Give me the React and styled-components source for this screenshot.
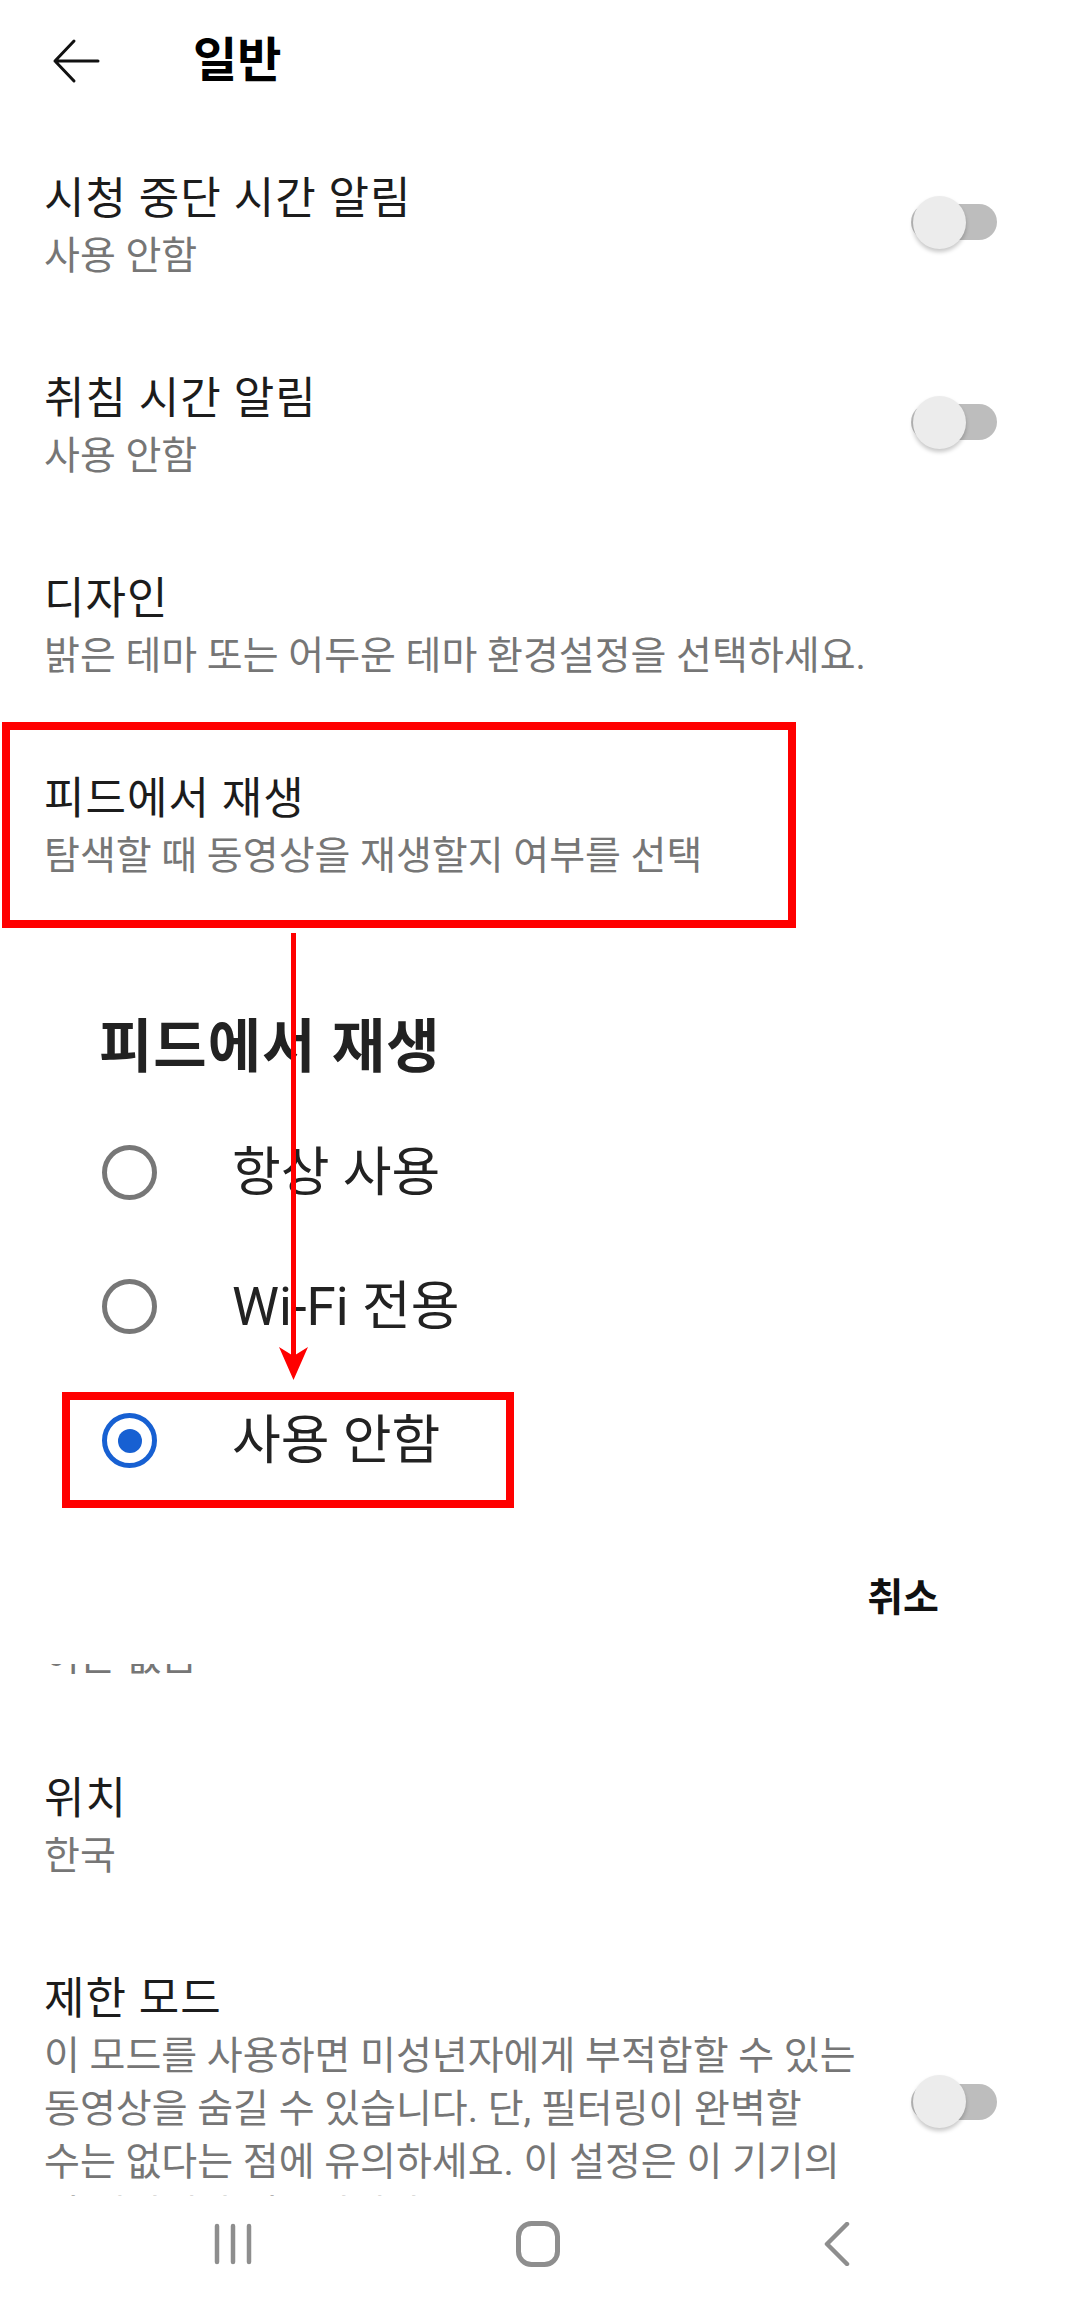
import React from 'react';
import styled, { createGlobalStyle, css } from 'styled-components';

const GlobalStyle = createGlobalStyle`
  html, body {
    margin: 0;
    padding: 0;
    background: #fff;
  }
  body {
    font-family: Roboto, "Noto Sans CJK KR", sans-serif;
  }
`;

const Page = styled.div`
  display: flex;
  flex-direction: column;
  width: 1080px;
  height: 2309px;
  background: #fff;
  overflow: hidden;
`;

const Scroll = styled.div`
  position: relative;
  height: 2196px;
  flex: none;
  overflow: hidden;
`;

const Header = styled.div`
  display: flex;
  align-items: center;
  height: 122px;
  padding-left: 52px;
  box-sizing: border-box;
  gap: 93px;
`;

const HeaderTitle = styled.h1`
  margin: 0;
  font-size: 48px;
  font-weight: 700;
  color: #000;
  line-height: 60px;
`;

const Row = styled.div`
  box-sizing: border-box;
  min-height: 200px;
  padding: 49px 83px 0 44px;

  ${(p) =>
    p.$marked &&
    css`
      width: 794px;
      height: 206px;
      min-height: 0;
      margin-left: 2px;
      border: 8px solid #ff0000;
      padding: 41px 0 0 34px;
    `}
`;

const RowBody = styled.div`
  display: flex;
`;

const RowText = styled.div`
  flex: 1;
  min-width: 0;
  display: flex;
  flex-direction: column;
`;

const RowTitle = styled.div`
  font-size: 44px;
  line-height: 56px;
  letter-spacing: 1px;
  color: #1c1c1c;
`;

const RowSub = styled.div`
  font-size: 39px;
  line-height: 53px;
  margin-top: 3px;
  color: #767676;
  word-break: keep-all;
`;

const SwitchSlot = styled.div`
  flex: none;
  display: flex;
  align-items: center;
  margin-left: 31px;
  padding-bottom: 10px;
`;

const SwitchTrack = styled.div`
  flex: none;
  display: flex;
  align-items: center;
  width: 86px;
  height: 36px;
  border-radius: 18px;
  background: #bdbdbd;
`;

const SwitchThumb = styled.div`
  flex: none;
  width: 53px;
  height: 53px;
  margin-left: 2px;
  border-radius: 50%;
  background: #ececec;
  box-shadow: 0 3px 4px rgba(0, 0, 0, 0.22);
`;

const Dialog = styled.section`
  display: flex;
  flex-direction: column;
  padding-top: 79px;
`;

const DialogTitle = styled.h2`
  margin: 0 0 37px 99px;
  font-size: 58px;
  line-height: 80px;
  font-weight: 700;
  letter-spacing: 1px;
  color: #222;
`;

const Options = styled.div`
  display: flex;
  flex-direction: column;
  gap: 18px;
`;

const Option = styled.label`
  display: flex;
  align-items: center;
  box-sizing: border-box;
  width: 452px;
  height: 116px;
  margin-left: 62px;
  padding: 0 0 19px 32px;
  border: 8px solid ${(p) => (p.$marked ? '#ff0000' : 'transparent')};
  gap: 75px;
`;

const Radio = styled.span`
  flex: none;
  box-sizing: border-box;
  width: 55px;
  height: 55px;
  border-radius: 50%;
  border: 5px solid ${(p) => (p.$checked ? '#1760d2' : '#777')};
  display: flex;
  align-items: center;
  justify-content: center;

  &::after {
    content: '';
    display: ${(p) => (p.$checked ? 'block' : 'none')};
    width: 24px;
    height: 24px;
    border-radius: 50%;
    background: #1760d2;
  }
`;

const OptionLabel = styled.span`
  font-size: 53px;
  line-height: 64px;
  color: #222;
  white-space: nowrap;
`;

const DialogActions = styled.div`
  display: flex;
  justify-content: flex-end;
  margin-top: 65px;
  padding-right: 141px;
`;

const TextButton = styled.button`
  border: 0;
  background: none;
  padding: 0;
  font-family: inherit;
  font-size: 39px;
  line-height: 50px;
  font-weight: 700;
  color: #111;
`;

const Clipped = styled.div`
  height: 14px;
  margin: 41px 0 44px;
  padding-left: 44px;
  overflow: hidden;

  div {
    margin-top: -32px;
    font-size: 39px;
    line-height: 50px;
    color: #767676;
  }
`;

const Pointer = styled.svg`
  position: absolute;
  left: 278px;
  top: 933px;
`;

const NavBar = styled.nav`
  flex: 1;
  display: flex;
  justify-content: space-between;
  align-items: center;
  padding: 0 230px 17px 214px;
  background: #fff;
`;

const settings = [
  { title: '시청 중단 시간 알림', sub: '사용 안함', toggle: true },
  { title: '취침 시간 알림', sub: '사용 안함', toggle: true },
  { title: '디자인', sub: '밝은 테마 또는 어두운 테마 환경설정을 선택하세요.' },
];

const options = ['항상 사용', 'Wi-Fi 전용', '사용 안함'];

const Switch = () => (
  <SwitchSlot>
    <SwitchTrack>
      <SwitchThumb />
    </SwitchTrack>
  </SwitchSlot>
);

const SettingRow = ({ title, sub, toggle, marked }) => (
  <Row $marked={marked}>
    <RowBody>
      <RowText>
        <RowTitle>{title}</RowTitle>
        <RowSub>{sub}</RowSub>
      </RowText>
      {toggle && <Switch />}
    </RowBody>
  </Row>
);

const App = () => {
  return (
    <Page>
      <GlobalStyle />
      <Scroll>
        <Header>
          <svg width="48" height="46" viewBox="0 0 48 46" fill="none">
            <path
              d="M46 23H3M22 3L3 23l19 20"
              stroke="#111"
              strokeWidth="3"
              strokeLinecap="round"
              strokeLinejoin="round"
            />
          </svg>
          <HeaderTitle>일반</HeaderTitle>
        </Header>

        {settings.map((s) => (
          <SettingRow key={s.title} {...s} />
        ))}
        <SettingRow
          title="피드에서 재생"
          sub="탐색할 때 동영상을 재생할지 여부를 선택"
          marked
        />

        <Dialog>
          <DialogTitle>피드에서 재생</DialogTitle>
          <Options>
            {options.map((o, i) => (
              <Option key={o} $marked={i === 2}>
                <Radio $checked={i === 2} />
                <OptionLabel>{o}</OptionLabel>
              </Option>
            ))}
          </Options>
          <DialogActions>
            <TextButton>취소</TextButton>
          </DialogActions>
        </Dialog>

        <Clipped>
          <div>이는 없음</div>
        </Clipped>

        <SettingRow title="위치" sub="한국" />
        <SettingRow
          title="제한 모드"
          sub="이 모드를 사용하면 미성년자에게 부적합할 수 있는 동영상을 숨길 수 있습니다. 단, 필터링이 완벽할 수는 없다는 점에 유의하세요. 이 설정은 이 기기의 이 계정에만 적용됩니다."
          toggle
        />

        <Pointer width="31" height="448" viewBox="0 0 31 448">
          <line x1="15.5" y1="0" x2="15.5" y2="424" stroke="#ff0000" strokeWidth="5" />
          <polygon points="1,414 15.5,447 30,414 15.5,423" fill="#ff0000" />
        </Pointer>
      </Scroll>

      <NavBar>
        <svg width="38" height="42" viewBox="0 0 38 42" fill="none">
          <path
            d="M3 3v36M19 3v36M35 3v36"
            stroke="#8e8e8e"
            strokeWidth="4.5"
            strokeLinecap="round"
          />
        </svg>
        <svg width="44" height="46" viewBox="0 0 44 46" fill="none">
          <rect x="2.5" y="2.5" width="39" height="41" rx="13" stroke="#8e8e8e" strokeWidth="5" />
        </svg>
        <svg width="26" height="44" viewBox="0 0 26 44" fill="none">
          <path
            d="M23 2L3 22l20 20"
            stroke="#8e8e8e"
            strokeWidth="4.5"
            strokeLinecap="round"
            strokeLinejoin="round"
          />
        </svg>
      </NavBar>
    </Page>
  );
};

export default App;
